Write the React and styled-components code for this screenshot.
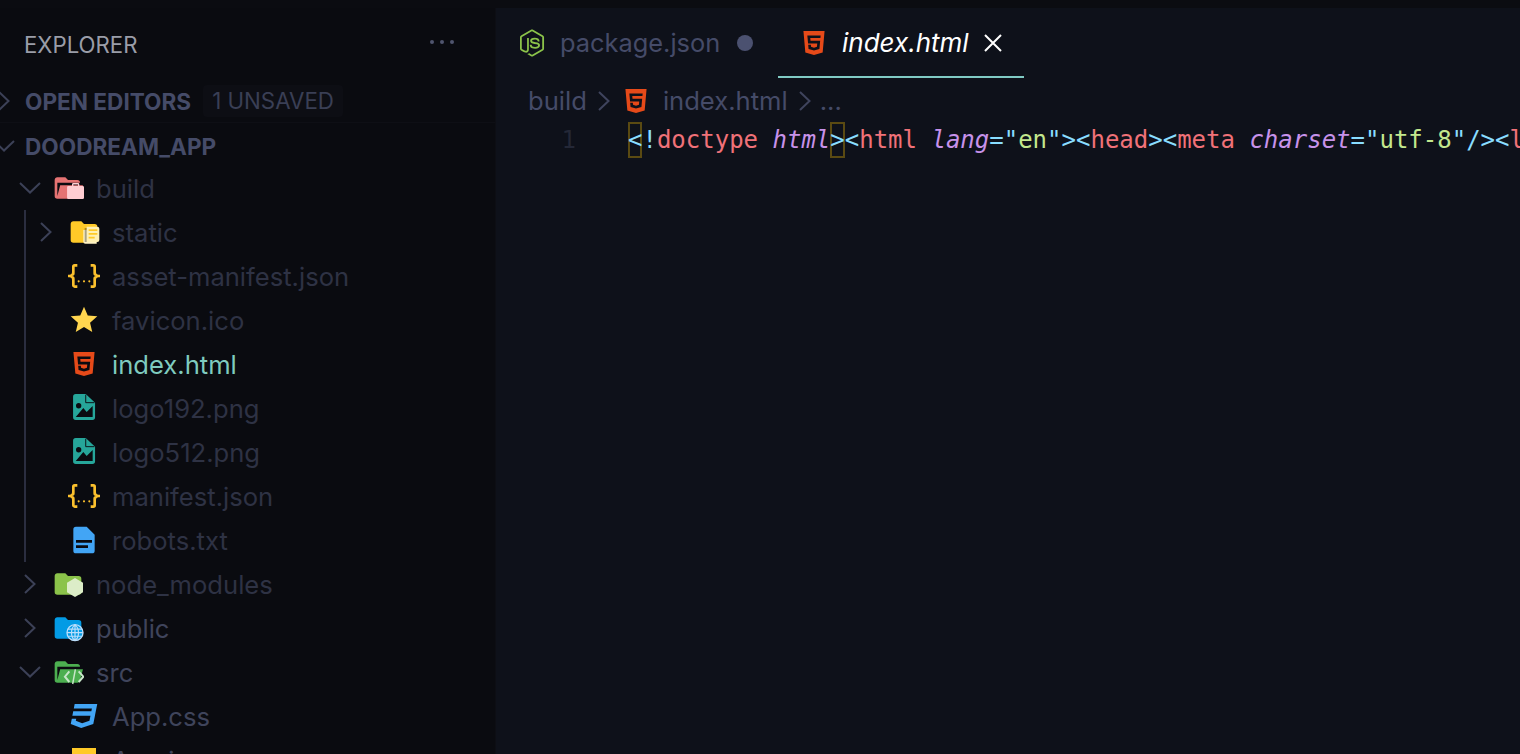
import React from "react";
import styled, { createGlobalStyle } from "styled-components";

const GlobalStyle = createGlobalStyle`
  * { box-sizing: border-box; }
  html, body { margin: 0; height: 100%; overflow: hidden; background: #0b0c11; }
  body { font-family: Inter, "Noto Sans", sans-serif; }
`;

const Shell = styled.div`
  display: flex;
  flex-direction: column;
  height: 754px;
  overflow: hidden;
`;
const TopStrip = styled.div`
  height: 8px;
  flex: none;
  background: #0b0c11;
`;
const Main = styled.div`
  display: flex;
  flex: 1;
  min-height: 0;
`;

/* sidebar */
const Sidebar = styled.aside`
  width: 496px;
  flex: none;
  background: #0a0b10;
  border-right: 1px solid #0d0e14;
  overflow: hidden;
`;
const SideTitle = styled.div`
  display: flex;
  align-items: center;
  justify-content: space-between;
  height: 72px;
  padding: 0 41px 0 24px;
  font-size: 22.2px;
  color: #9a9da8;
`;
const Dots = styled.div`
  display: flex;
  gap: 6px;
  margin-top: -4px;
  span {
    width: 4px;
    height: 4px;
    border-radius: 50%;
    background: #50556e;
  }
`;
const SectionRow = styled.div`
  display: flex;
  align-items: center;
  height: 43px;
  padding-top: ${(p) => p.$drop || 0}px;
  color: #454b68;
  font-size: 22.6px;
  font-weight: 700;
  ${(p) => p.$divided && "border-bottom: 1px solid #0e0f15;"}
`;
const Badge = styled.span`
  margin-left: 12px;
  padding: 4px 9px;
  border-radius: 4px;
  background: #0d0e14;
  color: #3a3f55;
  font-size: 22.3px;
  font-weight: 400;
  line-height: 24px;
`;
const Row = styled.div`
  display: flex;
  align-items: center;
  height: 44px;
  padding-left: ${(p) => p.$indent}px;
  font-size: 25.6px;
  white-space: nowrap;
  color: ${(p) => p.$color || "#2e3244"};
`;
const ChevronSlot = styled.span`
  display: flex;
  align-items: center;
  justify-content: center;
  flex: none;
  width: 24px;
  height: 24px;
  margin-right: ${(p) => p.$gap}px;
  margin-left: ${(p) => p.$pull || 0}px;
  color: #3c4157;
`;
const IconSlot = styled.span`
  display: flex;
  flex: none;
  width: 32px;
  height: 32px;
  margin-right: 12px;
`;
const RowLabel = styled.span`
  padding-top: 1px;
`;
const Guide = styled.div`
  margin-left: 24px;
  border-left: 2px solid #2b2e40;
`;

/* editor */
const Editor = styled.main`
  flex: 1;
  min-width: 0;
  background: #0e111a;
  overflow: hidden;
`;
const TabBar = styled.div`
  display: flex;
  height: 70px;
`;
const Tab = styled.div`
  display: flex;
  align-items: center;
  height: 70px;
  width: ${(p) => p.$width}px;
  padding-left: ${(p) => p.$pad}px;
  padding-top: 1px;
  font-size: ${(p) => (p.$active ? 26 : 25.4)}px;
  color: ${(p) => (p.$active ? "#fff" : "#454b68")};
  font-style: ${(p) => (p.$active ? "italic" : "normal")};
  border-bottom: 2px solid ${(p) => (p.$active ? "#80cbc4" : "transparent")};
`;
const TabIcon = styled.span`
  display: flex;
  flex: none;
  width: 32px;
  height: 32px;
  margin-right: ${(p) => p.$gap}px;
`;
const UnsavedDot = styled.span`
  width: 16px;
  height: 16px;
  margin-left: 17px;
  border-radius: 50%;
  background: #4b5170;
`;
const CloseX = styled.span`
  display: flex;
  margin-left: 14px;
  color: #fff;
`;
const Crumbs = styled.div`
  display: flex;
  align-items: center;
  height: 44px;
  padding: 1px 0 0 32px;
  font-size: 25.6px;
  color: #454b68;
`;
const CrumbChevron = styled.span`
  display: flex;
  margin: 0 ${(p) => p.$right}px 0 11px;
  color: #3f445d;
`;
const CrumbIcon = styled.span`
  display: flex;
  width: 32px;
  height: 32px;
  margin-right: 11px;
`;
const CodeLine = styled.div`
  display: flex;
  height: 36px;
  line-height: 36px;
  font-family: "DejaVu Sans Mono", "Liberation Mono", monospace;
  font-size: 24px;
  white-space: pre;
`;
const LineNumber = styled.span`
  flex: none;
  width: 80px;
  text-align: right;
  color: #242837;
`;
const Code = styled.code`
  margin-left: 52px;
  font: inherit;
`;
const tokenColors = {
  punct: "#89ddff",
  tag: "#f07178",
  attr: "#c792ea",
  str: "#c3e88d",
};
const Token = styled.span`
  color: ${(p) => tokenColors[p.$kind]};
  ${(p) => p.$kind === "attr" && "font-style: italic;"}
`;
const Match = styled.span`
  display: inline-block;
  height: 36px;
  vertical-align: top;
  color: #89ddff;
  box-shadow: inset 0 0 0 2px #5a4a12;
`;

/* icons, Material style on a 24 unit grid */
const Svg = ({ color, d, children }) => (
  <svg width="32" height="32" viewBox="0 0 24 24" fill={color}>
    {d && <path fillRule="evenodd" d={d} />}
    {children}
  </svg>
);
const FOLDER = "M10 4H4c-1.11 0-2 .89-2 2v12a2 2 0 0 0 2 2h16a2 2 0 0 0 2-2V8a2 2 0 0 0-2-2h-8l-2-2z";
const FOLDER_OPEN = "M19 20H4a2 2 0 0 1-2-2V6c0-1.11.89-2 2-2h6l2 2h7a2 2 0 0 1 2 2H4v10l2.14-8h17.07l-2.28 8.5c-.23.87-1.01 1.5-1.93 1.5z";
const Html = () => (
  <Svg color="#e64a19" d="M12 17.56L16.07 16.43L16.62 10.33H9.38L9.2 8.3H16.8L17 6.31H7L7.56 12.32H14.45L14.22 14.9L12 15.5L9.78 14.9L9.64 13.25H7.64L7.93 16.43L12 17.56M4.07 3H19.93L18.5 19.2L12 21L5.5 19.2L4.07 3Z" />
);
const Json = () => (
  <Svg color="#fbc02d" d="M5 3h2v2H5v5a2 2 0 0 1-2 2 2 2 0 0 1 2 2v5h2v2H5c-1.07-.27-2-.9-2-2v-4a2 2 0 0 0-2-2H0v-2h1a2 2 0 0 0 2-2V5a2 2 0 0 1 2-2m14 0a2 2 0 0 1 2 2v4a2 2 0 0 0 2 2h1v2h-1a2 2 0 0 0-2 2v4a2 2 0 0 1-2 2h-2v-2h2v-5a2 2 0 0 1 2-2 2 2 0 0 1-2-2V5h-2V3h2m-7 12.2a.8.8 0 1 1 0 1.6.8.8 0 0 1 0-1.6m-4 0a.8.8 0 1 1 0 1.6.8.8 0 0 1 0-1.6m8 0a.8.8 0 1 1 0 1.6.8.8 0 0 1 0-1.6z" />
);
const Star = () => <Svg color="#ffd54f" d="M12 17.27L18.18 21l-1.64-7.03L22 9.24l-7.19-.61L12 2 9.19 8.63 2 9.24l5.46 4.73L5.82 21z" />;
const ImageFile = () => (
  <Svg color="#26a69a" d="M5.8 1.500h7.500l7 6.500v11a2 2 0 0 1-2 2H5.800a2 2 0 0 1-2-2V3.500a2 2 0 0 1 2-2zM8 8.300a2 2 0 1 0 0 4 2 2 0 0 0 0-4zM5.800 18.700h12.700v-8.200l-4.500 4.500-2.500-3z">
    <path fill="none" stroke="#0a0b10" strokeWidth=".7" d="M13.300 2v6h6.500" />
  </Svg>
);
const DocFile = () => (
  <Svg color="#42a5f5" d="M6 2h8l6 6v12a2 2 0 0 1-2 2H6a2 2 0 0 1-2-2V4a2 2 0 0 1 2-2m9 16v-2H6v2h9m3-4v-2H6v2h12z" />
);
const CssFile = () => (
  <Svg color="#42a5f5" d="M5 3l-.65 3.34h13.59L17.5 8.5H3.92l-.66 3.33h13.59l-.76 3.81-5.48 1.81-4.75-1.81.33-1.64H2.85l-.79 4 7.85 3 9.05-3 1.2-6.03.24-1.21L21.94 3H5z" />
);
const JsFile = () => <Svg color="#ffca28" d="M3 3h18v18H3z" />;
const NodeJs = () => (
  <Svg color="#8bc34a" d="M12 1.85c-.27 0-.55.07-.78.2l-7.44 4.3c-.48.28-.78.8-.78 1.36v8.58c0 .56.3 1.08.78 1.36l1.95 1.12c.95.46 1.27.47 1.71.47 1.4 0 2.21-.85 2.21-2.33V8.44a.2.2 0 0 0-.2-.2h-.93a.2.2 0 0 0-.2.2v8.47c0 .66-.68 1.31-1.77.76L4.45 16.5a.26.26 0 0 1-.11-.21V7.71c0-.09.04-.17.11-.21l7.44-4.29c.06-.04.16-.04.22 0l7.44 4.29c.07.04.11.12.11.21v8.58c0 .08-.04.16-.11.21l-7.44 4.29c-.06.04-.16.04-.22 0L10 19.65a.2.2 0 0 0-.18 0c-.53.3-.63.34-1.12.51-.12.04-.31.11.07.32l2.48 1.47c.24.14.5.21.78.21s.54-.07.78-.21l7.44-4.29c.48-.28.78-.8.78-1.36V7.71c0-.56-.3-1.08-.78-1.36l-7.44-4.3c-.23-.13-.5-.2-.78-.2M14 8c-2.12 0-3.39.89-3.39 2.39 0 1.61 1.26 2.08 3.3 2.28 2.43.24 2.62.6 2.62 1.08 0 .83-.67 1.18-2.23 1.18-1.98 0-2.4-.49-2.55-1.47a.226.226 0 0 0-.22-.18h-.96c-.12 0-.21.09-.21.22 0 1.24.68 2.74 3.94 2.74 2.35 0 3.7-.93 3.7-2.55 0-1.61-1.08-2.03-3.37-2.34-2.31-.3-2.54-.46-2.54-1 0-.45.2-1.05 1.91-1.05 1.5 0 2.09.33 2.32 1.36.02.1.11.17.21.17h.97c.05 0 .11-.02.15-.07.04-.04.07-.1.05-.16C17.56 8.82 16.38 8 14 8z" />
);
const BuildFolder = () => (
  <Svg color="#e57373" d={FOLDER_OPEN}>
    <path fill="#ffcdd2" fillRule="evenodd" d="M15 10.500v-1.200a1 1 0 0 1 1-1h3.500a1 1 0 0 1 1 1v1.200h2.500a1 1 0 0 1 1 1v7.800a1 1 0 0 1-1 1H12.300a1 1 0 0 1-1-1v-7.800a1 1 0 0 1 1-1zm1 0h3.500v-1.200H16z" />
  </Svg>
);
const StaticFolder = () => (
  <Svg color="#ffca28" d={FOLDER}>
    <path fill="#fff3c4" d="M11.500 10.500h10v10.300h-8.500a1.500 1.500 0 0 1-1.500-1.500z" />
    <path fill="#0a0b10" d="M12.500 9h11.300v10.500H12.500z" opacity=".35" />
    <path fill="#fff0b3" d="M14 8h8a1.500 1.500 0 0 1 1.500 1.500v8.500a1.500 1.500 0 0 1-1.500 1.500h-8z" />
    <path fill="#ffca28" d="M15.500 10h6.500v1.200h-6.500zM15.500 12.800h6.500V14h-6.500zM15.500 15.600h4.500v1.200h-4.500z" />
  </Svg>
);
const NodeFolder = () => (
  <Svg color="#8bc34a" d={FOLDER}>
    <path fill="#dcedc8" d="M17.250 7.500l6 3.550v7.100l-6 3.550-6-3.550v-7.100z" />
  </Svg>
);
const PublicFolder = () => (
  <Svg color="#039be5" d={FOLDER}>
    <circle cx="17.250" cy="15.500" r="6" fill="#039be5" stroke="#bbdefb" strokeWidth="1" />
    <path fill="none" stroke="#bbdefb" strokeWidth=".9" d="M11.250 15.500h12M12 12.800h10.500M12 18.200h10.500M17.250 9.500v12M17.250 9.500c-3.500 3-3.500 9 0 12M17.250 9.500c3.500 3 3.500 9 0 12" />
  </Svg>
);
const SrcFolder = () => (
  <Svg color="#4caf50" d={FOLDER_OPEN}>
    <path fill="none" stroke="#c8e6c9" strokeWidth="1.500" d="M13 11.500l-3.300 4 3.300 4M20 11.500l3.500 4-3.500 4" />
    <path fill="none" stroke="#c8e6c9" strokeWidth="1.100" d="M17.500 10l-2 11" />
  </Svg>
);

const ChevronRight = ({ w = 12, h = 20 }) => (
  <svg width={w} height={h} viewBox="0 0 12 20" fill="none" stroke="currentColor" strokeWidth="2">
    <path d="M1 1l9.500 9L1 19" />
  </svg>
);
const ChevronDown = ({ w = 22, h = 12 }) => (
  <svg width={w} height={h} viewBox="0 0 22 12" fill="none" stroke="currentColor" strokeWidth="2">
    <path d="M1 1l10 9.500L21 1" />
  </svg>
);

const TreeRow = ({ indent, open, closed, icon, color, children }) => (
  <Row $indent={indent} $color={color}>
    <ChevronSlot $gap={10}>
      {open && <ChevronDown />}
      {closed && <ChevronRight />}
    </ChevronSlot>
    <IconSlot>{icon}</IconSlot>
    <RowLabel>{children}</RowLabel>
  </Row>
);

const App = () => (
  <>
    <GlobalStyle />
    <Shell>
      <TopStrip />
      <Main>
        <Sidebar>
          <SideTitle>
            EXPLORER
            <Dots>
              <span />
              <span />
              <span />
            </Dots>
          </SideTitle>
          <SectionRow $divided>
            <ChevronSlot $pull={-8} $gap={9}>
              <ChevronRight />
            </ChevronSlot>
            OPEN EDITORS
            <Badge>1 UNSAVED</Badge>
          </SectionRow>
          <SectionRow $drop={3}>
            <ChevronSlot $pull={-8} $gap={9}>
              <ChevronDown />
            </ChevronSlot>
            DOODREAM_APP
          </SectionRow>
          <TreeRow indent={18} open icon={<BuildFolder />}>build</TreeRow>
          <Guide>
            <TreeRow indent={8} closed icon={<StaticFolder />}>static</TreeRow>
            <TreeRow indent={8} icon={<Json />}>asset-manifest.json</TreeRow>
            <TreeRow indent={8} icon={<Star />}>favicon.ico</TreeRow>
            <TreeRow indent={8} icon={<Html />} color="#7fcbbf">index.html</TreeRow>
            <TreeRow indent={8} icon={<ImageFile />}>logo192.png</TreeRow>
            <TreeRow indent={8} icon={<ImageFile />}>logo512.png</TreeRow>
            <TreeRow indent={8} icon={<Json />}>manifest.json</TreeRow>
            <TreeRow indent={8} icon={<DocFile />}>robots.txt</TreeRow>
          </Guide>
          <TreeRow indent={18} closed icon={<NodeFolder />}>node_modules</TreeRow>
          <TreeRow indent={18} closed icon={<PublicFolder />} color="#3f445b">public</TreeRow>
          <TreeRow indent={18} open icon={<SrcFolder />} color="#3f445b">src</TreeRow>
          <TreeRow indent={34} icon={<CssFile />} color="#3f445b">App.css</TreeRow>
          <TreeRow indent={34} icon={<JsFile />} color="#3f445b">App.js</TreeRow>
        </Sidebar>
        <Editor>
          <TabBar>
            <Tab $width={282} $pad={20}>
              <TabIcon $gap={12}><NodeJs /></TabIcon>
              package.json
              <UnsavedDot />
            </Tab>
            <Tab $active $width={246} $pad={20}>
              <TabIcon $gap={12}><Html /></TabIcon>
              index.html
              <CloseX>
                <svg width="20" height="20" viewBox="0 0 20 20" fill="none" stroke="currentColor" strokeWidth="2">
                  <path d="M2 2l16 16M18 2L2 18" />
                </svg>
              </CloseX>
            </Tab>
          </TabBar>
          <Crumbs>
            build
            <CrumbChevron $right={10}><ChevronRight w={12} h={20} /></CrumbChevron>
            <CrumbIcon><Html /></CrumbIcon>
            index.html
            <CrumbChevron $right={9}><ChevronRight w={12} h={20} /></CrumbChevron>
            ...
          </Crumbs>
          <CodeLine>
            <LineNumber>1</LineNumber>
            <Code>
              <Match>{"<"}</Match>
              <Token $kind="punct">!</Token>
              <Token $kind="tag">doctype</Token>{" "}
              <Token $kind="attr">html</Token>
              <Match>{">"}</Match>
              <Token $kind="punct">{"<"}</Token>
              <Token $kind="tag">html</Token>{" "}
              <Token $kind="attr">lang</Token>
              <Token $kind="punct">=</Token>
              <Token $kind="punct">"</Token>
              <Token $kind="str">en</Token>
              <Token $kind="punct">"</Token>
              <Token $kind="punct">{"><"}</Token>
              <Token $kind="tag">head</Token>
              <Token $kind="punct">{"><"}</Token>
              <Token $kind="tag">meta</Token>{" "}
              <Token $kind="attr">charset</Token>
              <Token $kind="punct">=</Token>
              <Token $kind="punct">"</Token>
              <Token $kind="str">utf-8</Token>
              <Token $kind="punct">"</Token>
              <Token $kind="punct">{"/><"}</Token>
              <Token $kind="tag">link</Token>
            </Code>
          </CodeLine>
        </Editor>
      </Main>
    </Shell>
  </>
);

export default App;
